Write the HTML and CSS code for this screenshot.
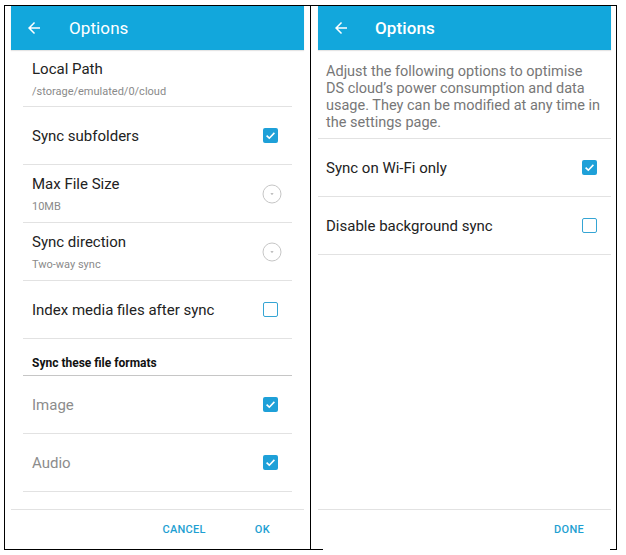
FILE: index.html
```html
<!DOCTYPE html>
<html lang="en">
<head>
<meta charset="utf-8">
<title>Options</title>
<link rel="stylesheet" href="styles.css">
</head>
<body>
<div class="frame">
  <div class="cell cell-left">
    <div class="screen">
      <div class="appbar">
        <svg class="back" width="18" height="18" viewBox="0 0 24 24"><path d="M20 11H7.83l5.59-5.59L12 4l-8 8 8 8 1.41-1.41L7.83 13H20v-2z" fill="#fff"/></svg>
        <span class="title">Options</span>
      </div>
      <div class="list list-inset">
        <div class="row row-first">
          <div class="texts"><div class="label">Local Path</div><div class="sub">/storage/emulated/0/cloud</div></div>
        </div>
        <div class="row">
          <div class="label">Sync subfolders</div>
          <span class="cb"><svg width="15" height="15" viewBox="0 0 15 15"><polyline points="3.6,7.6 6.3,10.2 11.4,4.9" fill="none" stroke="#fff" stroke-width="1.6"/></svg></span>
        </div>
        <div class="row">
          <div class="texts"><div class="label">Max File Size</div><div class="sub">10MB</div></div>
          <svg class="dd" width="20" height="20" viewBox="0 0 20 20"><circle cx="10" cy="10" r="9" fill="none" stroke="#c6c6c6" stroke-width="1"/><path d="M8.4 9.2h3.2L10 11.1z" fill="#aaa"/></svg>
        </div>
        <div class="row">
          <div class="texts"><div class="label">Sync direction</div><div class="sub">Two-way sync</div></div>
          <svg class="dd" width="20" height="20" viewBox="0 0 20 20"><circle cx="10" cy="10" r="9" fill="none" stroke="#c6c6c6" stroke-width="1"/><path d="M8.4 9.2h3.2L10 11.1z" fill="#aaa"/></svg>
        </div>
        <div class="row">
          <div class="label">Index media files after sync</div>
          <span class="cb cb-off"></span>
        </div>
        <div class="section">Sync these file formats</div>
        <div class="row">
          <div class="label label-muted">Image</div>
          <span class="cb"><svg width="15" height="15" viewBox="0 0 15 15"><polyline points="3.6,7.6 6.3,10.2 11.4,4.9" fill="none" stroke="#fff" stroke-width="1.6"/></svg></span>
        </div>
        <div class="row">
          <div class="label label-muted">Audio</div>
          <span class="cb"><svg width="15" height="15" viewBox="0 0 15 15"><polyline points="3.6,7.6 6.3,10.2 11.4,4.9" fill="none" stroke="#fff" stroke-width="1.6"/></svg></span>
        </div>
      </div>
      <div class="footer footer-left">
        <span class="btn">CANCEL</span>
        <span class="btn">OK</span>
      </div>
    </div>
  </div>
  <div class="cell cell-right">
    <div class="screen">
      <div class="appbar">
        <svg class="back" width="18" height="18" viewBox="0 0 24 24"><path d="M20 11H7.83l5.59-5.59L12 4l-8 8 8 8 1.41-1.41L7.83 13H20v-2z" fill="#fff"/></svg>
        <span class="title title-bold">Options</span>
      </div>
      <p class="intro">Adjust the following options to optimise<br>DS cloud’s power consumption and data<br>usage. They can be modified at any time in<br>the settings page.</p>
      <div class="list">
        <div class="row row-full">
          <div class="label">Sync on Wi-Fi only</div>
          <span class="cb"><svg width="15" height="15" viewBox="0 0 15 15"><polyline points="3.6,7.6 6.3,10.2 11.4,4.9" fill="none" stroke="#fff" stroke-width="1.6"/></svg></span>
        </div>
        <div class="row row-full">
          <div class="label">Disable background sync</div>
          <span class="cb cb-off"></span>
        </div>
      </div>
      <div class="footer footer-right">
        <span class="btn">DONE</span>
      </div>
    </div>
  </div>
</div>
</body>
</html>
```

FILE: styles.css
```css
* { box-sizing: border-box; }

body {
  margin: 0;
  background: #fff;
  font-family: Roboto, "Noto Sans", "Liberation Sans", sans-serif;
  color: #212121;
}

.frame {
  display: flex;
  margin: 5px 0 0 4px;
}

.cell {
  height: 545px;
  border-top: 1px solid #000;
}

.cell-left {
  width: 307px;
  border: 1px solid #000;
  padding: 0 6px;
}

.cell-right {
  width: 306px;
  border-right: 1px solid #000;
  padding: 0 5px 1px 7px;
  background:
    linear-gradient(#000, #000) left bottom / 12px 1px no-repeat,
    linear-gradient(#000, #000) right bottom / 6px 1px no-repeat;
}

.screen {
  width: 293px;
  height: 543px;
  display: flex;
  flex-direction: column;
  background: #fff;
}

.appbar {
  height: 44px;
  flex: none;
  background: #12a7dc;
  display: flex;
  align-items: center;
  padding-left: 14px;
  box-shadow: 0 1px 1px rgba(0, 0, 0, 0.1);
  position: relative;
  z-index: 1;
}

.back { flex: none; }

.title {
  margin-left: 26px;
  color: #fff;
  font-size: 17px;
  font-weight: 400;
  letter-spacing: 0.1px;
}

.title-bold { margin-left: 25px; font-weight: 500; }

.list-inset { margin: 0 12px; }

.row {
  height: 58px;
  border-bottom: 1px solid #e2e2e2;
  display: flex;
  align-items: center;
  justify-content: space-between;
  padding: 0 14px 0 9px;
}

.row-first { height: 57px; }

.row-full { padding: 0 14px 0 8px; }

.texts { padding-top: 2px; }

.label {
  font-size: 15px;
  line-height: 18px;
  color: #222;
}

.label-muted { color: #8c8c8c; }

.sub {
  margin-top: 7px;
  font-size: 11px;
  line-height: 14px;
  color: #8a8a8a;
}

.cb {
  width: 15px;
  height: 15px;
  flex: none;
  border-radius: 2px;
  background: #1ea0d8;
  display: flex;
}

.cb-off {
  background: none;
  border: 1.5px solid #35a5d4;
}

.dd { flex: none; margin-right: -4px; }

.section {
  height: 37px;
  border-bottom: 1px solid #c6c6c6;
  display: flex;
  align-items: flex-end;
  padding: 0 0 5px 9px;
  font-size: 12px;
  line-height: 14px;
  font-weight: 700;
  color: #111;
}

.intro {
  margin: 0;
  height: 89px;
  flex: none;
  border-bottom: 1px solid #e2e2e2;
  padding: 13px 0 0 8px;
  font-size: 14.5px;
  line-height: 17px;
  color: #777;
  white-space: nowrap;
  overflow: hidden;
}

.footer {
  margin-top: auto;
  height: 40px;
  border-top: 1px solid #e2e2e2;
  display: flex;
  align-items: center;
  justify-content: flex-end;
}

.footer-left { gap: 49px; padding-right: 34px; }
.footer-right { padding-right: 27px; }

.btn {
  font-size: 11px;
  font-weight: 500;
  color: #1e9fd2;
  letter-spacing: 0.3px;
}
```
